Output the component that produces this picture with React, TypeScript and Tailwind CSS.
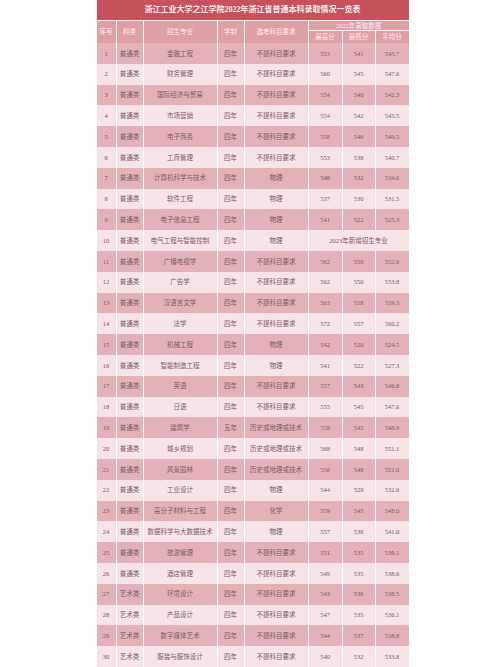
import React from 'react';

type Row = [string, string, string, string, string, string?, string?, string?];

const rows: Row[] = [
  ['1', '普通类', '金融工程', '四年', '不提科目要求', '553', '541', '543.7'],
  ['2', '普通类', '财务管理', '四年', '不提科目要求', '560', '545', '547.6'],
  ['3', '普通类', '国际经济与贸易', '四年', '不提科目要求', '554', '540', '542.3'],
  ['4', '普通类', '市场营销', '四年', '不提科目要求', '554', '542', '545.5'],
  ['5', '普通类', '电子商务', '四年', '不提科目要求', '558', '546', '549.5'],
  ['6', '普通类', '工商管理', '四年', '不提科目要求', '553', '538', '540.7'],
  ['7', '普通类', '计算机科学与技术', '四年', '物理', '548', '532', '534.6'],
  ['8', '普通类', '软件工程', '四年', '物理', '537', '530', '531.5'],
  ['9', '普通类', '电子信息工程', '四年', '物理', '541', '522', '525.3'],
  ['10', '普通类', '电气工程与智能控制', '四年', '物理'],
  ['11', '普通类', '广播电视学', '四年', '不提科目要求', '562', '550', '552.6'],
  ['12', '普通类', '广告学', '四年', '不提科目要求', '562', '550', '553.8'],
  ['13', '普通类', '汉语言文学', '四年', '不提科目要求', '563', '558', '559.3'],
  ['14', '普通类', '法学', '四年', '不提科目要求', '572', '557', '560.2'],
  ['15', '普通类', '机械工程', '四年', '物理', '542', '520', '524.5'],
  ['16', '普通类', '智能制造工程', '四年', '物理', '541', '522', '527.3'],
  ['17', '普通类', '英语', '四年', '不提科目要求', '557', '543', '546.8'],
  ['18', '普通类', '日语', '四年', '不提科目要求', '555', '545', '547.6'],
  ['19', '普通类', '建筑学', '五年', '历史或地理或技术', '558', '545', '548.9'],
  ['20', '普通类', '城乡规划', '四年', '历史或地理或技术', '568', '548', '551.1'],
  ['21', '普通类', '风景园林', '四年', '历史或地理或技术', '556', '548', '551.0'],
  ['22', '普通类', '工业设计', '四年', '物理', '544', '529', '532.6'],
  ['23', '普通类', '高分子材料与工程', '四年', '化学', '559', '545', '548.0'],
  ['24', '普通类', '数据科学与大数据技术', '四年', '物理', '557', '538', '541.0'],
  ['25', '普通类', '旅游管理', '四年', '不提科目要求', '551', '535', '539.1'],
  ['26', '普通类', '酒店管理', '四年', '不提科目要求', '549', '535', '538.6'],
  ['27', '艺术类', '环境设计', '四年', '不提科目要求', '543', '536', '538.5'],
  ['28', '艺术类', '产品设计', '四年', '不提科目要求', '547', '535', '536.1'],
  ['29', '艺术类', '数字媒体艺术', '四年', '不提科目要求', '544', '537', '538.8'],
  ['30', '艺术类', '服装与服饰设计', '四年', '不提科目要求', '540', '532', '533.8'],
];

const Cell = ({ children, dark, className = '' }: { children?: React.ReactNode; dark: boolean; className?: string }) => (
  <div
    className={`flex items-center justify-center whitespace-nowrap overflow-hidden ${
      dark ? 'bg-[#e4b1b8]' : 'bg-[#f7e4e7]'
    } ${className}`}
  >
    {children}
  </div>
);

export default function App() {
  return (
    <div className="w-[500px] h-[667px] bg-white flex justify-center overflow-hidden">
      <div
        className="w-[307px] h-[667px] grid grid-cols-[19px_26px_73px_26px_63px_33px_32px_33px] grid-rows-[20px_11px_12px_repeat(30,minmax(0,1fr))] gap-x-px bg-white text-[6.5px] text-[#7b6064]"
        style={{ fontFamily: '"Liberation Serif", "Noto Sans CJK SC", serif' }}
      >
        {/* Title */}
        <div className="col-span-8 flex items-center justify-center bg-[#c7525d] text-[#fbeef0] text-[8px] font-bold">
          浙江工业大学之江学院2022年浙江省普通本科录取情况一览表
        </div>

        {/* Header */}
        {['序号', '科类', '招生专业', '学制', '选考科目要求'].map((h) => (
          <div key={h} className="row-span-2 flex items-center justify-center bg-[#df9fa7] text-[#fbeef0] border-t border-white">
            {h}
          </div>
        ))}
        <div className="col-span-3 flex items-center justify-center bg-[#df9fa7] text-[#fbeef0] border-t border-b border-white">
          2022年录取数据
        </div>
        {['最高分', '最低分', '平均分'].map((h) => (
          <div key={h} className="flex items-center justify-center bg-[#df9fa7] text-[#fbeef0]">
            {h}
          </div>
        ))}

        {/* Body */}
        {rows.map((r, i) => {
          const dark = i % 2 === 0;
          return (
            <React.Fragment key={r[0]}>
              <Cell dark={dark}>{r[0]}</Cell>
              <Cell dark={dark}>{r[1]}</Cell>
              <Cell dark={dark}>{r[2]}</Cell>
              <Cell dark={dark}>{r[3]}</Cell>
              <Cell dark={dark}>{r[4]}</Cell>
              {r[5] ? (
                <>
                  <Cell dark={dark}>{r[5]}</Cell>
                  <Cell dark={dark}>{r[6]}</Cell>
                  <Cell dark={dark}>{r[7]}</Cell>
                </>
              ) : (
                <Cell dark={dark} className="col-span-3">
                  2023年新增招生专业
                </Cell>
              )}
            </React.Fragment>
          );
        })}
      </div>
    </div>
  );
}
